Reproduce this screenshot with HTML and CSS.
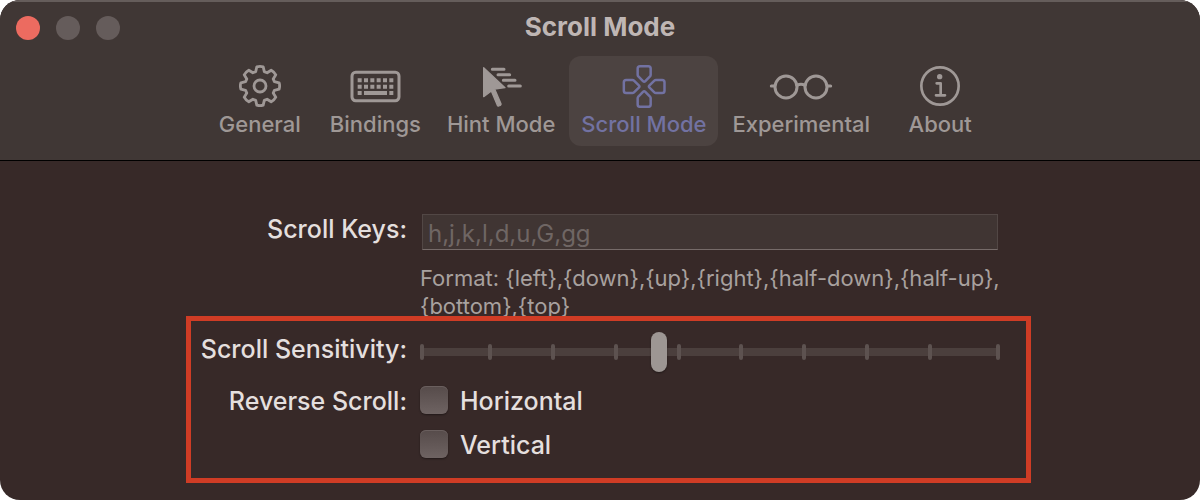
FILE: index.html
```html
<!DOCTYPE html>
<html lang="en">
<head>
<meta charset="utf-8">
<title>Scroll Mode</title>
<link rel="stylesheet" href="styles.css">
</head>
<body>
<div class="window">
  <header class="header">
    <div class="titlebar">
      <div class="lights">
        <button class="light light-close" type="button" aria-label="Close"></button>
        <button class="light" type="button" aria-label="Minimize" disabled></button>
        <button class="light" type="button" aria-label="Zoom" disabled></button>
      </div>
      <h1 class="title">Scroll Mode</h1>
    </div>
    <nav class="tabs">
      <button class="tab" type="button">
        <svg class="icon" viewBox="-22 -22 44 44" fill="none" stroke="currentColor" stroke-width="2.8" stroke-linejoin="round">
          <path d="M-4.3-14.4L-3.2-19.1Q0-20.2 3.2-19.1L4.3-14.4L7.1-13.2L11.2-15.8Q14.2-14.2 15.8-11.2L13.2-7.1L14.4-4.3L19.1-3.2Q20.2 0 19.1 3.2L14.4 4.3L13.2 7.1L15.8 11.2Q14.2 14.2 11.2 15.8L7.1 13.2L4.3 14.4L3.2 19.1Q0 20.2-3.2 19.1L-4.3 14.4L-7.1 13.2L-11.2 15.8Q-14.2 14.2-15.8 11.2L-13.2 7.1L-14.4 4.3L-19.1 3.2Q-20.2 0-19.1-3.2L-14.4-4.3L-13.2-7.1L-15.8-11.2Q-14.2-14.2-11.2-15.8L-7.1-13.2Z"/>
          <circle r="6"/>
        </svg>
        <span>General</span>
      </button>
      <button class="tab" type="button">
        <svg class="icon icon-keyboard" viewBox="417 42 156 132">
          <rect x="426" y="67" width="141" height="85" rx="11" fill="none" stroke="currentColor" stroke-width="9"/>
          <path fill="currentColor" d="M443 85h12v12h-12zM462 85h12v12h-12zM481 85h12v12h-12zM500 85h12v12h-12zM519 85h12v12h-12zM538 85h12v12h-12zM443 104h12v12h-12zM462 104h12v12h-12zM481 104h12v12h-12zM500 104h12v12h-12zM519 104h12v12h-12zM538 104h12v12h-12zM443 123h12v12h-12zM462 123h69v12h-69zM538 123h12v12h-12z"/>
        </svg>
        <span>Bindings</span>
      </button>
      <button class="tab" type="button">
        <svg class="icon" viewBox="147 42 132 132" fill="currentColor" stroke="currentColor" stroke-linejoin="round" stroke-linecap="round">
          <path stroke-width="4" d="M161 53L225 113L194 117L213 161Q214 164 211 166L206 168Q203 169 202 166L184 123L161 140Z"/>
          <path stroke-width="9" d="M187 58H222M204 74H239M220 91H255M236 108H271"/>
        </svg>
        <span>Hint Mode</span>
      </button>
      <button class="tab tab-selected" type="button" aria-current="page">
        <svg class="icon" viewBox="187 42 132 132" fill="none" stroke="currentColor" stroke-width="7.5" stroke-linejoin="round">
          <path id="pad" d="M241 48.500H266Q273 48.500 273 55.500V74Q273 77 271 79L257 93.500Q253.500 97 250 93.500L236 79Q234 77 234 74V55.500Q234 48.500 241 48.500Z"/>
          <use href="#pad" transform="rotate(90 253.500 109.500)"/>
          <use href="#pad" transform="rotate(180 253.500 109.500)"/>
          <use href="#pad" transform="rotate(270 253.500 109.500)"/>
        </svg>
        <span>Scroll Mode</span>
      </button>
      <button class="tab" type="button">
        <svg class="icon icon-glasses" viewBox="135 42 192 132" fill="none" stroke="currentColor" stroke-width="9" stroke-linecap="round">
          <circle cx="186" cy="111" r="33"/>
          <circle cx="276" cy="111" r="33"/>
          <path d="M219 106Q231 99 243 106M142 108H152M310 108H320"/>
        </svg>
        <span>Experimental</span>
      </button>
      <button class="tab" type="button">
        <svg class="icon" viewBox="576 42 132 132" fill="none" stroke="currentColor" stroke-width="8" stroke-linecap="round" stroke-linejoin="round">
          <circle cx="642" cy="108" r="56"/>
          <circle cx="641" cy="80" r="8" fill="currentColor" stroke="none"/>
          <path d="M632 100H644V136M630 136H657"/>
        </svg>
        <span>About</span>
      </button>
    </nav>
  </header>

  <main class="content">
    <form class="form">
      <div class="row">
        <label class="label label-keys" for="keys">Scroll Keys:</label>
        <div class="field">
          <input class="textbox" id="keys" type="text" placeholder="h,j,k,l,d,u,G,gg">
          <p class="help">Format: {left},{down},{up},{right},{half-down},{half-up},{bottom},{top}</p>
        </div>
      </div>
      <div class="marked">
        <div class="row">
          <label class="label label-slider" for="sensitivity">Scroll Sensitivity:</label>
          <div class="slider">
            <div class="ticks" aria-hidden="true"><i></i><i></i><i></i><i></i><i></i><i></i><i></i><i></i><i></i><i></i></div>
            <input class="range" id="sensitivity" type="range" min="0" max="100" value="41">
          </div>
        </div>
        <div class="row" role="group" aria-labelledby="reverse">
          <span class="label label-reverse" id="reverse">Reverse Scroll:</span>
          <div class="checks">
            <label class="check"><input class="box" type="checkbox"><span>Horizontal</span></label>
            <label class="check"><input class="box" type="checkbox"><span>Vertical</span></label>
          </div>
        </div>
        <div class="outline"></div>
      </div>
    </form>
  </main>
</div>
</body>
</html>
```
FILE: styles.css
```css
* {
  box-sizing: border-box;
}

body {
  margin: 0;
  background: #fff;
  font-family: Inter, "Liberation Sans", sans-serif;
  font-size: 25px;
  line-height: 28px;
  color: #e4dfde;
}

.window {
  min-height: 100vh;
  border-radius: 20px;
  overflow: hidden;
  background: #372928;
}

.header {
  background: #403735;
  border-top: 2px solid #655d5b;
  border-bottom: 1px solid #000;
  padding-bottom: 14px;
}

.titlebar {
  display: grid;
  grid-template-columns: 1fr auto 1fr;
  align-items: center;
  height: 52px;
  padding: 0 16px;
}

.lights {
  display: flex;
  gap: 16px;
}

.light {
  width: 24px;
  height: 24px;
  padding: 0;
  border: 0;
  border-radius: 50%;
  background: #655c5b;
}

.light-close {
  background: #ec6b60;
}

.title {
  margin: 0;
  padding-bottom: 2px;
  font-size: 26px;
  font-weight: 700;
  line-height: 28px;
  color: #bfb6b4;
}

.tabs {
  display: flex;
  justify-content: center;
  gap: 2px;
  padding-top: 2px;
}

.tab {
  display: flex;
  flex-direction: column;
  align-items: center;
  gap: 2px;
  min-width: 112px;
  padding: 8px 12px;
  border: 0;
  border-radius: 12px;
  background: none;
  font: inherit;
  font-size: 22px;
  font-weight: 500;
  color: #9f9896;
}

.tab-selected {
  background: #4c4341;
  color: #7272a2;
}

.icon {
  width: 44px;
  height: 44px;
}

.icon-keyboard {
  width: 52px;
}

.icon-glasses {
  width: 64px;
}

.content {
  padding: 53px 16px 24px;
}

.form {
  display: grid;
  gap: 12px;
  max-width: 800px;
  margin: 0 auto;
}

.row {
  display: grid;
  grid-template-columns: 207px 1fr;
  column-gap: 13px;
}

.label {
  font-weight: 500;
  text-align: right;
  white-space: nowrap;
}

.label-keys,
.label-reverse {
  padding-top: 1px;
}

.label-slider {
  padding-top: 3px;
}

.textbox {
  display: block;
  width: calc(100% - 4px);
  height: 36px;
  margin: 0 2px;
  padding: 2px 5px 0;
  border: 1px solid #524745;
  border-bottom: 1px solid #766b69;
  background: #403533;
  font: inherit;
  font-size: 24px;
  color: inherit;
}

.textbox::placeholder {
  color: #6f6664;
  opacity: 1;
}

.help {
  margin: 14px 0 0;
  font-size: 22px;
  line-height: 28px;
  color: #a8a19f;
  overflow-wrap: anywhere;
}

.marked {
  position: relative;
  display: grid;
  gap: 14px;
}

.outline {
  position: absolute;
  inset: -16px -31px -25px -14px;
  border: 5px solid #cf3c25;
  pointer-events: none;
}

.slider {
  display: grid;
  align-items: center;
  height: 40px;
}

.ticks,
.range {
  grid-area: 1 / 1;
}

.ticks {
  display: flex;
  justify-content: space-between;
  background: linear-gradient(#4b3f3d, #4b3f3d) center / calc(100% - 4px) 8px no-repeat;
}

.ticks i {
  width: 4px;
  height: 16px;
  border-radius: 2px;
  background: #5d5250;
}

.ticks i:first-child {
  margin-right: 5px;
}

.ticks i:last-child {
  margin-left: 5px;
}

.range {
  appearance: none;
  width: 100%;
  height: 40px;
  margin: 0;
  background: none;
}

.range::-webkit-slider-thumb {
  appearance: none;
  width: 16px;
  height: 40px;
  border-radius: 8px;
  background: #9d9693;
  box-shadow: 0 1px 2px #0006;
}

.checks {
  display: grid;
  gap: 16px;
}

.check {
  display: flex;
  align-items: center;
  gap: 12px;
  height: 28px;
  font-weight: 500;
}

.check span {
  padding-top: 2px;
}

.box {
  appearance: none;
  width: 28px;
  height: 28px;
  margin: 0;
  border-radius: 6px;
  background: linear-gradient(#564b4a, #6e6362);
  box-shadow: 0 1px 2px #0006, inset 0 1px 0 #6a5f5e;
}
```
